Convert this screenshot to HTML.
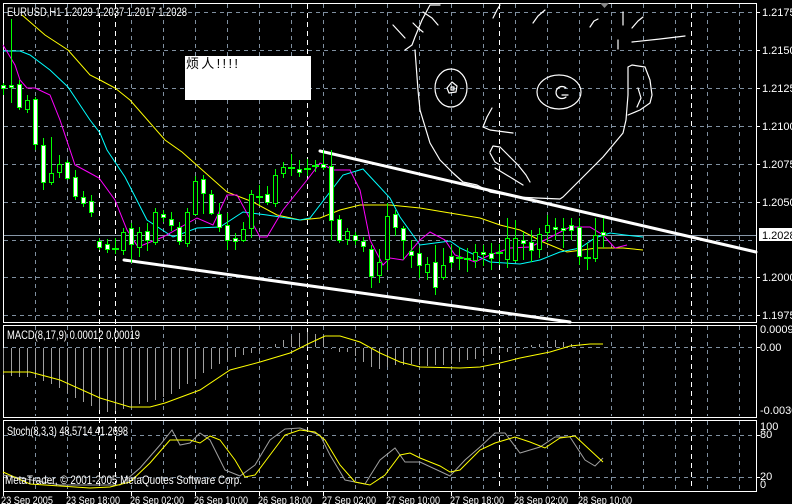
<!DOCTYPE html>
<html><head><meta charset="utf-8"><style>
html,body{margin:0;padding:0;background:#000;width:792px;height:504px;overflow:hidden}
svg{display:block}
text{font-family:"Liberation Sans","Noto Sans CJK SC",sans-serif;font-size:11px;fill:#fff}
</style></head><body>
<svg width="792" height="504" viewBox="0 0 792 504" xmlns="http://www.w3.org/2000/svg">
<rect width="792" height="504" fill="#000"/>
<g stroke="#8090a0" stroke-width="1" stroke-dasharray="4 4">
<path d="M35.5 4V322M67.5 4V322M131.5 4V322M163.5 4V322M195.5 4V322M227.5 4V322M259.5 4V322M291.5 4V322M323.5 4V322M355.5 4V322M387.5 4V322M419.5 4V322M451.5 4V322M483.5 4V322M515.5 4V322M547.5 4V322M579.5 4V322M611.5 4V322M643.5 4V322M675.5 4V322M707.5 4V322M739.5 4V322"/>
<path d="M35.5 326V416M67.5 326V416M131.5 326V416M163.5 326V416M195.5 326V416M227.5 326V416M259.5 326V416M291.5 326V416M323.5 326V416M355.5 326V416M387.5 326V416M419.5 326V416M451.5 326V416M483.5 326V416M515.5 326V416M547.5 326V416M579.5 326V416M611.5 326V416M643.5 326V416M675.5 326V416M707.5 326V416M739.5 326V416"/>
<path d="M35.5 421V490M67.5 421V490M131.5 421V490M163.5 421V490M195.5 421V490M227.5 421V490M259.5 421V490M291.5 421V490M323.5 421V490M355.5 421V490M387.5 421V490M419.5 421V490M451.5 421V490M483.5 421V490M515.5 421V490M547.5 421V490M579.5 421V490M611.5 421V490M643.5 421V490M675.5 421V490M707.5 421V490M739.5 421V490"/>
<path d="M4 12.5H756M4 50.5H756M4 88.5H756M4 126.5H756M4 164.5H756M4 202.5H756M4 240.5H756M4 277.5H756M4 315.5H756M4 347.5H756M4 435.5H756M4 477.5H756"/>
</g>
<g stroke="#fff" stroke-width="1" stroke-dasharray="5 4">
<path d="M99.5 4V490M115.5 4V490M307.5 4V490M499.5 4V490M691.5 4V490"/>
</g>
<line x1="4" y1="235.5" x2="756" y2="235.5" stroke="#8898a8"/>
<g fill="none" stroke="#fff" stroke-width="1">
<rect x="3.5" y="3.5" width="753" height="319"/>
<rect x="3.5" y="325.5" width="753" height="92"/>
<rect x="3.5" y="420.5" width="753" height="71"/>
</g>
<g fill="none" stroke="#fff" stroke-width="1.2" stroke-linecap="round" stroke-linejoin="round">
<ellipse cx="451" cy="88" rx="16" ry="19"/>
<path d="M447 88 L452 82 L457 86 L456 92 L449 93 Z M451 87 l3 0 l0 3 l-3 0 z"/>
<ellipse cx="559" cy="92" rx="22" ry="17"/>
<path d="M566 88 A6 6 0 1 0 566 97 M562 95 L568 95"/>
<path d="M415 50 L418 90 L420 110 L423 120 L430 143 L440 160 L453 173 L463 182 L477 185 L490 192 L517 197 L537 198 L560 199 L563 197 L587 173 L603 157 L623 133 L626 120 L628 95 L628 67 L632 65 L645 67 L650 80 L652 95 L650 103 L640 110 L628 115"/>
<path d="M638 88 L641 98 L637 107"/>
<path d="M492 108 L487 117 L483 127 L490 130 L513 133"/>
<path d="M490 152 L493 146 L500 147 L508 155 L518 165 L526 175 L530 182"/>
<path d="M490 153 L495 162 L500 165"/>
<path d="M495 168 L510 177 L523 185"/>
<path d="M393 25 L405 38"/>
<path d="M405 50 L412 45 L415 37 L422 20 L430 5 L440 5"/>
<path d="M423 12 L432 18 L438 25"/>
<path d="M413 23 L418 28 L423 32"/>
<path d="M493 18 L497 10 L500 5"/>
<path d="M533 23 L538 16 L545 10"/>
<path d="M590 27 L594 21 L598 19"/>
<path d="M623 12 L623 25"/>
<path d="M632 28 L638 21 L643 17"/>
<path d="M618 40 L618 49"/>
<path d="M632 42 L660 39 L685 36"/>
</g>
<path d="M600 3 L609 3 L604.5 8 Z" fill="#888"/>
<g stroke="#fff" stroke-width="3" stroke-linecap="round">
<line x1="320" y1="151" x2="756" y2="252"/>
<line x1="124" y1="260" x2="570" y2="322"/>
</g>
<g fill="none" stroke-width="1">
<polyline stroke="#ffff00" points="22,15 45,35 68,50 90,75 100,80 115,88 130,100 165,140 182,152 200,168 227,192 253,202 277,215 300,220 320,218 340,210 360,205 390,205 420,208 480,218 500,225 520,230 543,242 567,252 597,248 623,248 643,250"/>
<polyline stroke="#00ffff" points="3,51 20,51 30,55 50,70 68,87 90,120 100,133 107,150 125,177 147,220 173,237 197,228 220,227 243,212 267,215 300,220 310,218 343,175 363,169 390,198 400,217 420,245 435,243 450,241 460,248 490,262 520,264 540,260 560,252 580,248 595,238 610,233 625,235 643,237"/>
<polyline stroke="#ff00ff" points="3,45 15,65 20,80 27,88 35,88 50,95 60,120 70,150 75,165 88,172 99,178 115,200 127,230 138,247 163,237 197,218 213,225 227,195 237,195 260,237 267,237 283,210 307,180 320,163 333,170 350,170 360,190 370,240 383,265 390,258 403,260 420,240 430,232 445,240 455,255 475,262 490,255 510,248 530,247 545,240 570,227 590,227 603,235 615,248 627,245"/>
</g>
<g stroke="#00ff00" stroke-width="1">
<path d="M3.5 83V95M11.5 19V103M19.5 80V110M27.5 95V113M35.5 97V150M43.5 138V190M51.5 137V185M59.5 155V178M67.5 160V180M75.5 170V200M83.5 191V207M91.5 195V217M99.5 238V250M107.5 239V253M115.5 238V254M123.5 228V255M131.5 223V263M139.5 227V257M147.5 223V251M155.5 208V245M163.5 210V222M171.5 212V231M179.5 222V245M187.5 208V247M195.5 176V215M203.5 175V214M211.5 190V215M219.5 203V232M227.5 213V250M235.5 233V250M243.5 222V242M251.5 190V238M259.5 185V205M267.5 186V205M275.5 169V207M283.5 162V178M291.5 154V176M299.5 160V177M307.5 159V176M315.5 160V172M323.5 150V170M331.5 150V240M339.5 215V243M347.5 228V245M355.5 232V245M363.5 237V252M371.5 245V288M379.5 249V283M387.5 203V270M395.5 210V236M403.5 226V260M411.5 240V268M419.5 248V278M427.5 257V280M435.5 245V295M443.5 248V280M451.5 245V268M459.5 247V270M467.5 248V272M475.5 244V268M483.5 245V266M491.5 243V270M499.5 244V265M507.5 218V268M515.5 220V262M523.5 232V260M531.5 230V262M539.5 228V258M547.5 215V242M555.5 218V240M563.5 218V248M571.5 218V240M579.5 218V265M587.5 243V270M595.5 218V262M603.5 218V248"/>
<g fill="#fff">
<rect x="1.5" y="85.5" width="4" height="3"/><rect x="9.5" y="85.5" width="4" height="2"/><rect x="17.5" y="84.5" width="4" height="23"/><rect x="33.5" y="99.5" width="4" height="45"/><rect x="41.5" y="145.5" width="4" height="37"/><rect x="65.5" y="162.5" width="4" height="16"/><rect x="73.5" y="177.5" width="4" height="19"/><rect x="81.5" y="197.5" width="4" height="6"/><rect x="89.5" y="201.5" width="4" height="11"/><rect x="97.5" y="241.5" width="4" height="6"/><rect x="105.5" y="244.5" width="4" height="5"/><rect x="129.5" y="228.5" width="4" height="16"/><rect x="145.5" y="231.5" width="4" height="9"/><rect x="161.5" y="214.5" width="4" height="3"/><rect x="169.5" y="219.5" width="4" height="6"/><rect x="177.5" y="227.5" width="4" height="14"/><rect x="201.5" y="179.5" width="4" height="14"/><rect x="209.5" y="194.5" width="4" height="19"/><rect x="217.5" y="214.5" width="4" height="13"/><rect x="225.5" y="225.5" width="4" height="15"/><rect x="233.5" y="238.5" width="4" height="3"/><rect x="265.5" y="194.5" width="4" height="8"/><rect x="297.5" y="169.5" width="4" height="3"/><rect x="321.5" y="164.5" width="4" height="3"/><rect x="329.5" y="166.5" width="4" height="54"/><rect x="337.5" y="219.5" width="4" height="21"/><rect x="353.5" y="235.5" width="4" height="5"/><rect x="361.5" y="241.5" width="4" height="5"/><rect x="369.5" y="249.5" width="4" height="27"/><rect x="393.5" y="214.5" width="4" height="13"/><rect x="401.5" y="228.5" width="4" height="12"/><rect x="409.5" y="251.5" width="4" height="4"/><rect x="417.5" y="253.5" width="4" height="12"/><rect x="433.5" y="262.5" width="4" height="25"/><rect x="449.5" y="256.5" width="4" height="6"/><rect x="481.5" y="252.5" width="4" height="2"/><rect x="489.5" y="253.5" width="4" height="5"/><rect x="521.5" y="240.5" width="4" height="3"/><rect x="529.5" y="242.5" width="4" height="8"/><rect x="553.5" y="227.5" width="4" height="2"/><rect x="561.5" y="228.5" width="4" height="2"/><rect x="569.5" y="225.5" width="4" height="5"/><rect x="577.5" y="227.5" width="4" height="29"/><rect x="601.5" y="232.5" width="4" height="3"/>
</g>
<g fill="#000">
<rect x="25.5" y="100.5" width="4" height="9"/><rect x="49.5" y="173.5" width="4" height="9"/><rect x="57.5" y="164.5" width="4" height="8"/><rect x="121.5" y="232.5" width="4" height="18"/><rect x="137.5" y="232.5" width="4" height="15"/><rect x="153.5" y="212.5" width="4" height="30"/><rect x="185.5" y="212.5" width="4" height="31"/><rect x="193.5" y="181.5" width="4" height="33"/><rect x="241.5" y="229.5" width="4" height="11"/><rect x="249.5" y="194.5" width="4" height="34"/><rect x="273.5" y="175.5" width="4" height="28"/><rect x="281.5" y="167.5" width="4" height="6"/><rect x="345.5" y="231.5" width="4" height="8"/><rect x="377.5" y="262.5" width="4" height="13"/><rect x="385.5" y="216.5" width="4" height="43"/><rect x="425.5" y="264.5" width="4" height="8"/><rect x="441.5" y="265.5" width="4" height="12"/><rect x="473.5" y="252.5" width="4" height="8"/><rect x="505.5" y="238.5" width="4" height="21"/><rect x="513.5" y="238.5" width="4" height="22"/><rect x="537.5" y="234.5" width="4" height="15"/><rect x="545.5" y="225.5" width="4" height="7"/><rect x="593.5" y="235.5" width="4" height="23"/>
</g>
<g fill="#00ff00" stroke="none">
<rect x="112" y="248" width="7" height="2"/><rect x="256" y="196" width="7" height="2"/><rect x="288" y="167" width="7" height="2"/><rect x="304" y="168" width="7" height="2"/><rect x="312" y="165" width="7" height="2"/><rect x="456" y="257" width="7" height="2"/><rect x="464" y="258" width="7" height="2"/><rect x="496" y="252" width="7" height="2"/><rect x="584" y="257" width="7" height="2"/>
</g>
</g>
<rect x="185" y="56" width="126" height="44" fill="#fff"/>
<text x="186" y="68" style="fill:#000;font-size:13px" textLength="52" lengthAdjust="spacing">烦人!!!!</text>
<text x="7" y="16" style="font-size:12px" textLength="180" lengthAdjust="spacingAndGlyphs">EURUSD,H1  1.2029 1.2037 1.2017 1.2028</text>
<g stroke="#fff"><path d="M757 12.5h3M757 50.5h3M757 88.5h3M757 126.5h3M757 164.5h3M757 202.5h3M757 277.5h3M757 315.5h3M757 347.5h3M757 435.5h3M757 477.5h3"/></g>
<g style="font-size:11px">
<text x="762" y="16">1.2175</text>
<text x="762" y="54">1.2150</text>
<text x="762" y="92">1.2125</text>
<text x="762" y="130">1.2100</text>
<text x="762" y="168">1.2075</text>
<text x="762" y="206">1.2050</text>
<rect x="759" y="228" width="33" height="13" fill="#fff"/>
<text x="762" y="239" style="fill:#000">1.2028</text>
<text x="762" y="281">1.2000</text>
<text x="762" y="319">1.1975</text>
<text x="760" y="333">0.00094</text>
<text x="760" y="351">0.00</text>
<text x="760" y="414">-0.00305</text>
<text x="760" y="430">100</text>
<text x="760" y="438">80</text>
<text x="760" y="480">20</text>
<text x="760" y="488">0</text>
</g>
<path stroke="#a0a0a0" stroke-width="1" fill="none" d="M3.5 348V375M11.5 348V376M19.5 348V377M27.5 348V377M35.5 348V378M43.5 348V381M51.5 348V384M59.5 348V388M67.5 348V393M75.5 348V398M83.5 348V402M91.5 348V406M99.5 348V410M107.5 348V412M115.5 348V411M123.5 348V409M131.5 348V406M139.5 348V404M147.5 348V402M155.5 348V400M163.5 348V397M171.5 348V394M179.5 348V389M187.5 348V384M195.5 348V379M203.5 348V373M211.5 348V369M219.5 348V364M227.5 348V360M235.5 348V357M243.5 348V355M251.5 348V353M259.5 348V351M267.5 348V349M275.5 347V344M283.5 347V340M291.5 347V336M299.5 347V333M307.5 347V332M315.5 347V334M323.5 347V337M331.5 348V349M339.5 348V352M347.5 348V352M355.5 348V356M363.5 348V362M371.5 348V367M379.5 348V369M387.5 348V367M395.5 348V365M403.5 348V365M411.5 348V364M419.5 348V365M427.5 348V366M435.5 348V365M443.5 348V365M451.5 348V364M459.5 348V362M467.5 348V360M475.5 348V359M483.5 348V356M491.5 348V354M499.5 348V353M507.5 348V352M515.5 348V350M523.5 348V349M531.5 347V345M539.5 347V344M547.5 347V341M555.5 347V340M563.5 347V342M571.5 347V344"/>
<polyline fill="none" stroke="#ffff00" points="3,372 30,372 60,380 100,398 130,407 150,407 165,403 200,390 230,370 260,362 290,353 310,343 325,336 340,336 360,342 380,353 400,362 420,367 460,368 480,367 500,363 520,358 550,352 570,346 590,344 603,344"/>
<text x="7" y="339" style="font-size:12px" textLength="133" lengthAdjust="spacingAndGlyphs">MACD(8,17,9) 0.00012 0.00019</text>
<polyline fill="none" stroke="#a0a0a0" points="3,475 60,485 120,485 140,468 160,445 172,430 180,445 190,443 200,433 210,440 225,470 240,476 255,465 270,440 285,429 300,428 320,435 330,455 345,480 365,484 380,460 395,448 405,462 420,462 450,476 465,460 480,447 495,433 505,433 520,453 540,447 555,437 570,437 585,460 595,466 603,458"/>
<polyline fill="none" stroke="#ffff00" points="3,472 30,484 60,486 90,488 110,487 130,482 150,463 170,440 190,440 200,443 210,436 220,440 235,460 245,477 255,475 270,455 285,435 300,430 315,432 325,440 340,465 355,482 370,485 385,475 400,455 410,453 420,458 440,466 450,472 460,470 480,450 495,443 515,437 530,442 545,448 560,438 575,436 590,450 603,462"/>
<text x="7" y="435" style="font-size:12px" textLength="121" lengthAdjust="spacingAndGlyphs">Stoch(8,3,3) 48.5714 41.2698</text>
<text x="5" y="484" style="font-size:12px" textLength="237" lengthAdjust="spacingAndGlyphs">MetaTrader, © 2001-2005 MetaQuotes Software Corp.</text>
<g stroke="#fff"><path d="M3.5 492v4M67.5 492v4M131.5 492v4M195.5 492v4M259.5 492v4M323.5 492v4M387.5 492v4M451.5 492v4M515.5 492v4M579.5 492v4"/></g>
<g style="font-size:12px">
<text x="1" y="504" textLength="52" lengthAdjust="spacingAndGlyphs">23 Sep 2005</text>
<text x="66" y="504" textLength="54" lengthAdjust="spacingAndGlyphs">23 Sep 18:00</text>
<text x="130" y="504" textLength="54" lengthAdjust="spacingAndGlyphs">26 Sep 02:00</text>
<text x="194" y="504" textLength="54" lengthAdjust="spacingAndGlyphs">26 Sep 10:00</text>
<text x="258" y="504" textLength="54" lengthAdjust="spacingAndGlyphs">26 Sep 18:00</text>
<text x="322" y="504" textLength="54" lengthAdjust="spacingAndGlyphs">27 Sep 02:00</text>
<text x="386" y="504" textLength="54" lengthAdjust="spacingAndGlyphs">27 Sep 10:00</text>
<text x="450" y="504" textLength="54" lengthAdjust="spacingAndGlyphs">27 Sep 18:00</text>
<text x="514" y="504" textLength="54" lengthAdjust="spacingAndGlyphs">28 Sep 02:00</text>
<text x="578" y="504" textLength="54" lengthAdjust="spacingAndGlyphs">28 Sep 10:00</text>
</g>
</svg>
</body></html>
